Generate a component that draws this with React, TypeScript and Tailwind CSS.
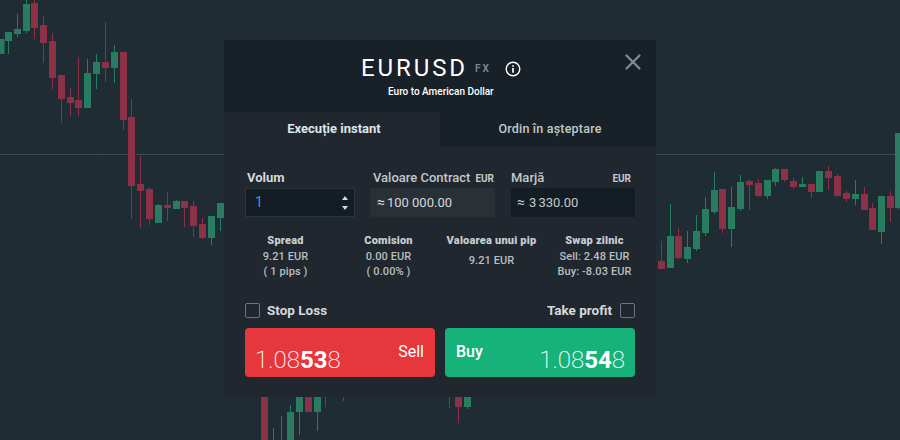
import { X } from "lucide-react"

// x, wick top, wick bottom, body top, body bottom, up?
type Candle = [number, number, number, number, number, boolean]

const candles: Candle[] = [
  [1, 39, 54, 39, 54, true],
  [8.5, 32, 54, 32, 41, true],
  [17.5, 14, 37, 29, 34, true],
  [26.5, 0, 33, 4, 31, true],
  [34.5, 0, 39, 3, 28, false],
  [43.5, 16, 63, 25, 43, false],
  [52.5, 33, 89, 41, 78, false],
  [61.5, 75, 123, 75, 99, false],
  [70.5, 88, 116, 97, 103, false],
  [78.5, 57, 116, 100, 108, false],
  [87.5, 59, 108, 73, 108, true],
  [96.5, 54, 89, 62, 74, true],
  [105.5, 22, 82, 62, 68, false],
  [114.5, 45, 83, 52, 68, true],
  [123.5, 52, 130, 52, 120, false],
  [131.5, 99, 219, 117, 186, false],
  [140.5, 156, 228, 184, 191, false],
  [149.5, 187, 225, 189, 219, false],
  [158.5, 204, 223, 205, 223, true],
  [167.5, 192, 221, 205, 208, false],
  [176.5, 200, 209, 201, 209, true],
  [184.5, 201, 227, 201, 208, false],
  [193.5, 201, 237, 206, 226, false],
  [202.5, 218, 239, 224, 238, false],
  [211.5, 216, 245, 216, 238, true],
  [220.5, 203, 231, 203, 218, true],
  [264.5, 380, 440, 380, 440, false],
  [273.5, 428, 440, 440, 440, true],
  [281.5, 416, 440, 439, 440, true],
  [290.5, 405, 440, 412, 440, true],
  [299.5, 380, 435, 380, 412, true],
  [308.5, 380, 412, 380, 412, false],
  [317.5, 380, 431, 380, 412, true],
  [325.5, 380, 407, 380, 380, false],
  [343.5, 380, 401, 380, 380, false],
  [449.5, 380, 408, 380, 380, false],
  [458.5, 380, 423, 380, 407, false],
  [467.5, 380, 409, 380, 407, true],
  [661.5, 241, 269, 261, 269, false],
  [670.5, 204, 268, 236, 268, true],
  [678.5, 228, 259, 236, 258, false],
  [687.5, 231, 263, 247, 259, true],
  [696.5, 215, 251, 231, 249, true],
  [705.5, 197, 236, 209, 233, true],
  [714.5, 172, 214, 190, 212, true],
  [722.5, 189, 233, 189, 229, false],
  [731.5, 187, 247, 207, 229, true],
  [740.5, 175, 211, 182, 209, true],
  [749.5, 179, 210, 181, 185, false],
  [758.5, 179, 197, 183, 196, false],
  [767.5, 180, 199, 180, 196, true],
  [775.5, 168, 186, 169, 182, true],
  [784.5, 169, 182, 169, 180, false],
  [793.5, 178, 189, 181, 187, false],
  [802.5, 177, 187, 184, 187, true],
  [811.5, 184, 198, 184, 192, false],
  [819.5, 171, 192, 171, 192, true],
  [828.5, 166, 190, 171, 178, false],
  [837.5, 174, 197, 176, 196, false],
  [846.5, 191, 202, 193, 199, false],
  [855.5, 180, 205, 194, 199, true],
  [864.5, 187, 210, 194, 210, false],
  [872.5, 203, 230, 208, 230, false],
  [881.5, 196, 244, 196, 232, true],
  [890.5, 191, 222, 196, 208, false],
  [898.5, 133, 209, 133, 208, true],
]

function Chart() {
  return (
    <svg className="absolute inset-0" width="900" height="440" viewBox="0 0 900 440">
      <line x1="97.5" y1="0" x2="97.5" y2="440" stroke="#232f37" />
      <line x1="0" y1="154.5" x2="900" y2="154.5" stroke="#3d4a50" />
      {candles.map(([x, wt, wb, bt, bb, up]) => {
        const edge = up ? "#23805f" : "#8f2f47"
        const fill = up ? "#2b7a61" : "#8a3346"
        return (
          <g key={x}>
            <line x1={x} y1={wt} x2={x} y2={wb} stroke={edge} />
            {bb > bt && <rect x={x - 3} y={bt + 0.5} width="6" height={bb - bt - 1} fill={fill} stroke={edge} />}
          </g>
        )
      })}
    </svg>
  )
}

function Stat({ title, lines }: { title: string; lines: string[] }) {
  return (
    <div className="flex flex-col items-center text-center">
      <div className="text-[11px] leading-[16px] font-black tracking-[0.2px] text-[#c9ced1]">{title}</div>
      <div className={lines.length === 1 ? "mt-[4px] text-[11px] leading-[15px] font-medium tracking-[0.1px] text-[#b9bfc3]" : "text-[11px] leading-[15px] font-medium tracking-[0.1px] text-[#b9bfc3]"}>
        {lines.map((l) => (
          <div key={l}>{l}</div>
        ))}
      </div>
    </div>
  )
}

export default function App() {
  return (
    <div className="relative h-[440px] w-[900px] overflow-hidden bg-[#1f2c34] font-[Roboto,sans-serif]">
      <Chart />
      <div className="relative mt-[40px] ml-[224px] h-[357px] w-[432px] bg-[#20272e]">
        {/* header */}
        <div className="relative h-[72px] bg-[#182127] pt-[12px]">
          <div className="flex items-center pl-[137px]">
            <span className="text-[24px] leading-[33px] tracking-[2.9px] text-white">EURUSD</span>
            <span className="ml-[7px] text-[10px] font-bold tracking-[2px] text-[#77848c]">FX</span>
            <svg className="ml-[14px]" width="16" height="16" viewBox="0 0 16 16" fill="none" stroke="#fff" strokeWidth="1.4">
              <circle cx="8" cy="8" r="6.8" />
              <line x1="8" y1="7" x2="8" y2="11.8" strokeWidth="1.7" />
              <line x1="8" y1="4.2" x2="8" y2="5.8" strokeWidth="1.7" />
            </svg>
          </div>
          <div className="pl-[164px] text-[10px] leading-[14px] font-medium text-white">Euro to American Dollar</div>
          <X className="absolute top-[9px] right-[10px] text-[#7f8d96]" size={26} strokeWidth={2.1} />
        </div>

        {/* tabs */}
        <div className="flex h-[34px]">
          <div className="flex w-[216px] items-center justify-center pl-[4px] text-[13px] font-bold text-[#dfe6ea]">Execuție instant</div>
          <div className="flex w-[216px] items-center justify-center bg-[#182127] pl-[4px] text-[12.5px] font-medium tracking-[0.2px] text-[#c3c8cb]">Ordin în așteptare</div>
        </div>

        {/* inputs */}
        <div className="flex gap-[15px] px-[21px] pt-[22px]">
          <div className="w-[110px]">
            <div className="flex h-[20px] items-center pl-[2px] text-[13px] font-bold text-[#d5d9dc]">Volum</div>
            <div className="flex h-[29px] items-center justify-between border border-[#2a343b] bg-[#141d24] pr-[5px] pl-[9px] text-[14px] text-[#3a9bd5]">
              1
              <svg width="8" height="20" viewBox="0 0 8 20" fill="#d5d9dc">
                <path d="M4 3 7 7H1Z" />
                <path d="M4 17 1 13H7Z" />
              </svg>
            </div>
          </div>
          <div className="w-[125px]">
            <div className="flex h-[20px] items-center justify-between pr-[1px] pl-[3px] text-[13px] font-medium whitespace-nowrap text-[#c3c8cb]">
              Valoare Contract
              <span className="text-[10px] font-bold">EUR</span>
            </div>
            <div className="flex h-[29px] items-center gap-[2px] border border-[#262f35] bg-[#2a3136] pl-[6px] text-[13px] text-[#d5d9dc]">
              <span className="text-[14px]">≈</span>100 000.00
            </div>
          </div>
          <div className="ml-[1px] w-[124px]">
            <div className="flex h-[20px] items-center justify-between pr-[4px] text-[13px] font-medium text-[#c3c8cb]">
              Marjă
              <span className="text-[10px] font-bold">EUR</span>
            </div>
            <div className="flex h-[29px] items-center gap-[4px] bg-[#141d24] pl-[6px] text-[13px] text-[#c3c8cb] [word-spacing:-1px]">
              <span className="text-[14px]">≈</span>3 330.00
            </div>
          </div>
        </div>

        {/* stats */}
        <div className="grid grid-cols-4 px-[10px] pt-[16px]">
          <Stat title="Spread" lines={["9.21 EUR", "( 1 pips )"]} />
          <Stat title="Comision" lines={["0.00 EUR", "( 0.00% )"]} />
          <Stat title="Valoarea unui pip" lines={["9.21 EUR"]} />
          <Stat title="Swap zilnic" lines={["Sell: 2.48 EUR", "Buy: -8.03 EUR"]} />
        </div>

        {/* stop loss / take profit */}
        <div className="mt-[21px] flex items-center justify-between px-[21px]">
          <div className="flex items-center gap-[7px]">
            <div className="h-[15px] w-[15px] rounded-[2px] border border-[#6b777e]" />
            <span className="text-[13.5px] font-bold text-[#d5d9dc]">Stop Loss</span>
          </div>
          <div className="flex items-center gap-[8px]">
            <span className="text-[13.5px] font-bold text-[#d5d9dc]">Take profit</span>
            <div className="h-[15px] w-[15px] rounded-[2px] border border-[#6b777e]" />
          </div>
        </div>

        {/* buy sell */}
        <div className="mt-[8px] flex gap-[10px] px-[21px]">
          <div className="flex h-[49px] w-[190px] justify-between rounded-[4px] bg-[#e6373d] pr-[11px] pl-[10px] text-white">
            <span className="pt-[15px] text-[24px] leading-[34px] font-extralight">
              1.08<b className="font-bold">53</b>8
            </span>
            <span className="pt-[14px] text-[16px] leading-[20px]">Sell</span>
          </div>
          <div className="flex h-[49px] w-[190px] justify-between rounded-[4px] bg-[#17b27a] pr-[10px] pl-[11px] text-white">
            <span className="pt-[14px] text-[16px] leading-[20px] font-medium">Buy</span>
            <span className="pt-[15px] text-[24px] leading-[34px] font-extralight">
              1.08<b className="font-bold">54</b>8
            </span>
          </div>
        </div>
      </div>
    </div>
  )
}
